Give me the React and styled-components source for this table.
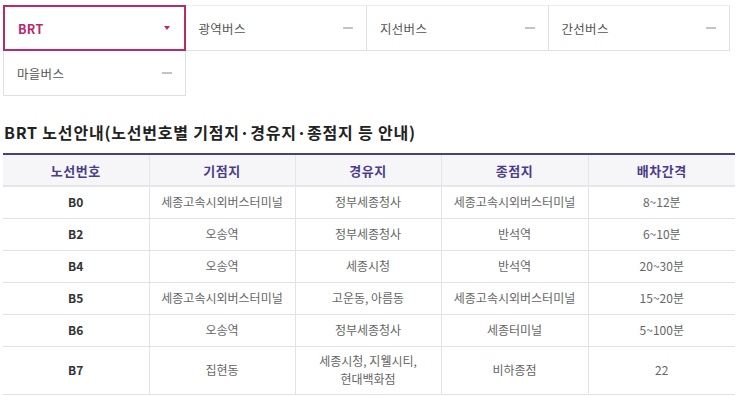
import React from "react";
import styled, { createGlobalStyle } from "styled-components";

const Global = createGlobalStyle`
  html, body { margin: 0; padding: 0; background: #fff; }
  body { font-family: "Noto Sans CJK KR", "Noto Sans", sans-serif; }
  * { box-sizing: border-box; }
`;

const Page = styled.div`
  padding: 5px 8px 0 3px;
`;

const TabGrid = styled.div`
  display: grid;
  grid-template-columns: repeat(4, 181.5px);
  border-top: 1px solid #ececec;
  border-left: 1px solid #e2e2e2;
  width: 727px;
`;

const Tab = styled.div`
  display: flex;
  align-items: center;
  justify-content: space-between;
  height: 45px;
  padding: 0 13px 0 13px;
  border-right: 1px solid #e0e0e0;
  border-bottom: 1px solid #e0e0e0;
  font-size: 12.5px;
  letter-spacing: 0.3px;
  color: ${(p) => (p.$active ? "#b8296d" : "#555")};
  font-weight: ${(p) => (p.$active ? 700 : 400)};
  position: relative;
  ${(p) =>
    p.$active &&
    `
    border: 2px solid #b8296d;
    margin: -1px 0 0 -1px;
    height: 46px;
    padding: 0 14px 0 13px;
    z-index: 1;
  `}
`;

const Minus = styled.span`
  display: block;
  width: 10px;
  height: 2px;
  background: #c4c4c4;
`;

const Caret = styled.span`
  display: block;
  width: 0;
  height: 0;
  border-left: 3.5px solid transparent;
  border-right: 3.5px solid transparent;
  border-top: 4px solid #b8296d;
`;

const Title = styled.h2`
  margin: 26px 0 0 1px;
  font-size: 16px;
  font-weight: 700;
  color: #222;
  line-height: 21px;
  letter-spacing: 0.8px;
`;

const Table = styled.table`
  margin-top: 10px;
  width: 732px;
  border-collapse: collapse;
  table-layout: fixed;
  border-top: 2px solid #4b3f80;
  font-size: 12px;
`;

const Th = styled.th`
  height: 32px;
  background: #f6f6f8;
  color: #4a3c8a;
  font-weight: 700;
  font-size: 13px;
  letter-spacing: 0.5px;
  border-bottom: 2px solid #e6e6e6;
  border-left: 1px solid #e6e6e6;
  &:first-child { border-left: none; }
  padding: 0;
`;

const Td = styled.td`
  height: ${(p) => (p.$tall ? 48 : 32)}px;
  text-align: center;
  color: ${(p) => (p.$strong ? "#333" : "#666")};
  font-weight: ${(p) => (p.$strong ? 700 : 400)};
  border-bottom: 1px solid #e3e3e3;
  border-left: 1px solid #e3e3e3;
  &:first-child { border-left: none; }
  padding: 0 4px;
  line-height: 18px;
`;

const tabs = [
  { label: "BRT", active: true },
  { label: "광역버스" },
  { label: "지선버스" },
  { label: "간선버스" },
  { label: "마을버스" },
];

const rows = [
  ["B0", "세종고속시외버스터미널", "정부세종청사", "세종고속시외버스터미널", "8~12분"],
  ["B2", "오송역", "정부세종청사", "반석역", "6~10분"],
  ["B4", "오송역", "세종시청", "반석역", "20~30분"],
  ["B5", "세종고속시외버스터미널", "고운동, 아름동", "세종고속시외버스터미널", "15~20분"],
  ["B6", "오송역", "정부세종청사", "세종터미널", "5~100분"],
  ["B7", "집현동", "세종시청, 지웰시티,\n현대백화점", "비하종점", "22"],
];

export default function App() {
  return (
    <>
      <Global />
      <Page>
        <TabGrid>
          {tabs.map((t) => (
            <Tab key={t.label} $active={t.active}>
              <span>{t.label}</span>
              {t.active ? <Caret /> : <Minus />}
            </Tab>
          ))}
        </TabGrid>
        <Title>BRT 노선안내(노선번호별 기점지·경유지·종점지 등 안내)</Title>
        <Table>
          <colgroup>
            <col style={{ width: 146 }} />
            <col style={{ width: 146 }} />
            <col style={{ width: 146 }} />
            <col style={{ width: 147 }} />
            <col style={{ width: 147 }} />
          </colgroup>
          <thead>
            <tr>
              <Th>노선번호</Th>
              <Th>기점지</Th>
              <Th>경유지</Th>
              <Th>종점지</Th>
              <Th>배차간격</Th>
            </tr>
          </thead>
          <tbody>
            {rows.map((r) => {
              const tall = r[2].includes("\n");
              return (
                <tr key={r[0]}>
                  {r.map((c, i) => (
                    <Td key={i} $strong={i === 0} $tall={tall}>
                      {c.split("\n").map((line, j) => (
                        <React.Fragment key={j}>
                          {j > 0 && <br />}
                          {line}
                        </React.Fragment>
                      ))}
                    </Td>
                  ))}
                </tr>
              );
            })}
          </tbody>
        </Table>
      </Page>
    </>
  );
}
